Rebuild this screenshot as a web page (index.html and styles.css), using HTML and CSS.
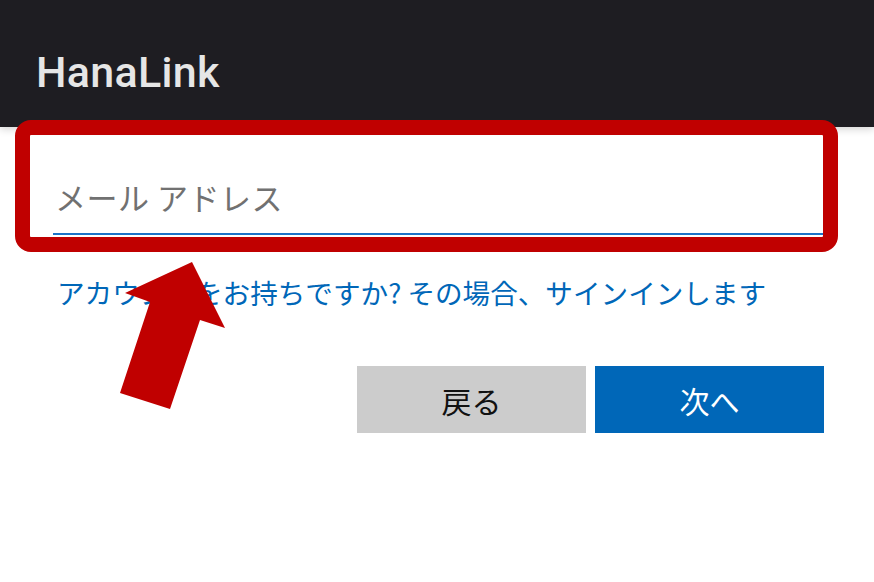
FILE: index.html
```html
<!DOCTYPE html>
<html lang="ja">
<head>
    <meta charset="UTF-8">
    <meta name="viewport" content="width=device-width, initial-scale=1.0">
    <title>HanaLink</title>
    <link rel="stylesheet" href="styles.css">
</head>
<body>
    <header class="app-bar">
        <h1 class="app-title">HanaLink</h1>
    </header>

    <main class="signup">
        <form class="signup-form">
            <input class="email-input" type="email" placeholder="メール アドレス">
            <a class="signin-link" href="#">アカウントをお持ちですか? その場合、サインインします</a>
            <div class="actions">
                <button type="button" class="btn btn-back">戻る</button>
                <button type="button" class="btn btn-next">次へ</button>
            </div>
        </form>
    </main>

    <!-- callout marking the email field -->
    <div class="callout-box"></div>
    <svg class="callout-arrow" width="874" height="582" viewBox="0 0 874 582">
        <polygon points="192,262 225,328 200,320 170,409 120,393 150,302 125,293" fill="#c00000"/>
    </svg>
</body>
</html>
```

FILE: styles.css
```css
body {
    margin: 0;
    padding: 0;
    position: relative;
    background-color: #ffffff;
    font-family: "Noto Sans CJK JP", "Noto Sans", sans-serif;
    min-height: 582px;
}

.app-bar {
    height: 127px;
    background-color: #1e1d22;
    box-shadow: 0 2px 8px rgba(0, 0, 0, 0.18);
    display: flex;
    align-items: center;
    padding-left: 36px;
    box-sizing: border-box;
}

.app-title {
    margin: 0;
    padding-top: 16px;
    font-family: Roboto, "Liberation Sans", sans-serif;
    font-weight: 500;
    font-size: 43px;
    letter-spacing: 0.3px;
    color: #e6e6e6;
}

.signup {
    padding: 33px 50px 0 53px;
}

.signup-form {
    display: flex;
    flex-direction: column;
}

.email-input {
    height: 75px;
    padding: 0 2px;
    border: none;
    border-bottom: 2px solid #1a73c8;
    font-family: inherit;
    font-size: 31px;
    letter-spacing: 0.5px;
    color: #333333;
    outline: none;
    box-sizing: border-box;
}

.email-input::placeholder {
    color: #717171;
}

.signin-link {
    margin-top: 39px;
    margin-left: 4px;
    font-size: 27.6px;
    line-height: 36px;
    color: #0067b8;
    text-decoration: none;
}

.actions {
    display: flex;
    justify-content: flex-end;
    gap: 9px;
    margin-top: 56px;
}

.btn {
    width: 229px;
    height: 67px;
    border: none;
    font-family: inherit;
    font-size: 30px;
    cursor: pointer;
}

.btn-back {
    background-color: #cccccc;
    color: #111111;
}

.btn-next {
    background-color: #0067b8;
    color: #ffffff;
}

.callout-box {
    position: absolute;
    left: 15px;
    top: 120px;
    width: 823px;
    height: 132px;
    border: 15px solid #c00000;
    border-radius: 16px;
    box-sizing: border-box;
}

.callout-arrow {
    position: absolute;
    left: 0;
    top: 0;
    pointer-events: none;
}
```
